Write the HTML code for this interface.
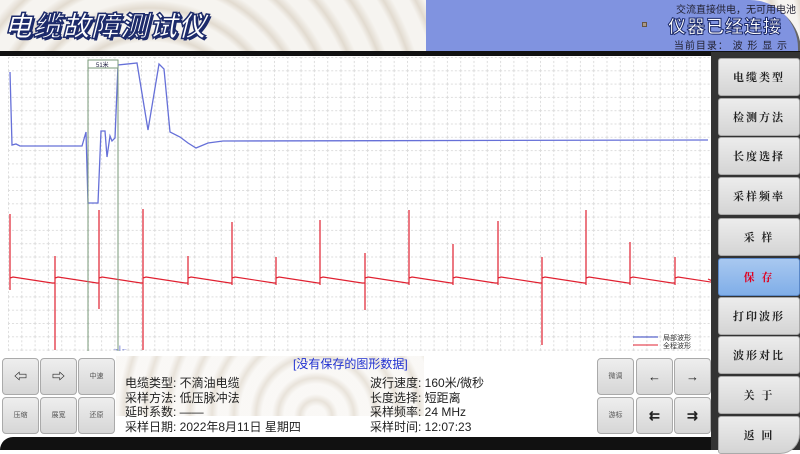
<!DOCTYPE html>
<html><head><meta charset="utf-8"><style>
*{margin:0;padding:0;box-sizing:border-box}
body{width:800px;height:450px;overflow:hidden;background:#fff;position:relative;font-family:"Liberation Sans","Noto Sans CJK SC",sans-serif}
.hdr{position:absolute;left:0;top:0;width:800px;height:52px;background:repeating-radial-gradient(circle at 150px 140px,#f6f4f0 0 14px,#e2dbd0 20px,#f6f4f0 28px)}
.title{position:absolute;left:4px;top:5px;font:italic bold 28px "Noto Sans CJK SC",sans-serif;color:#fff;letter-spacing:1px;-webkit-text-stroke:1.5px #1c2a6a;text-shadow:2px 2px 0 #1c2a6a}
.blue{position:absolute;left:426px;top:0;width:372px;height:51px;background:#8093e0;border-top-right-radius:48px;box-shadow:3px 3px 0 #666}
.b1{position:absolute;right:2px;top:1px;font-size:10px;color:#223}
.b2{position:absolute;right:16px;top:13px;font:bold 18px "Noto Sans CJK SC",sans-serif;color:#fff;-webkit-text-stroke:1px #1c2a6a;letter-spacing:1px}
.b3{position:absolute;right:10px;top:37px;font-size:10px;color:#223;letter-spacing:1px}
.line{position:absolute;left:0;top:51px;width:800px;height:5px;background:#111}
.chart{position:absolute;left:8px;top:57px;width:703px;height:294px;background:#fff}
.side{position:absolute;left:711px;top:52px;width:89px;height:398px;background:#333}
.btn{position:absolute;left:718px;width:82px;height:38px;background:linear-gradient(#ececec,#d4d4d4);border:1px solid #aaa;border-radius:3px;font:bold 11px "Noto Serif CJK SC",serif;color:#222;text-align:center;line-height:36px;letter-spacing:2px}
.btn.sel{background:linear-gradient(#a8c8f0,#80aee8);color:#e00020;border-color:#5a88c8}
.bot{position:absolute;left:0;top:352px;width:711px;height:85px;background:#fff}
.blk{position:absolute;left:0;top:437px;width:711px;height:13px;background:#111;border-top-left-radius:30px}
.sb{position:absolute;width:37px;height:37px;background:linear-gradient(#eee,#d6d6d6);border:1px solid #aaa;border-radius:4px;font-size:7px;color:#555;text-align:center;line-height:35px}
.sb.a{font-size:13px;color:#222;font-weight:bold}
.info{position:absolute;font-size:12px;color:#222;line-height:14.5px;white-space:pre}
.bg2{position:absolute;left:116px;top:356px;width:308px;height:60px;background:repeating-radial-gradient(circle at 200px 60px,#f8f6f3 0 10px,#e3dcd1 16px,#f8f6f3 22px);opacity:.8}
</style></head><body>
<div class="hdr"></div>
<div class="title">电缆故障测试仪</div>
<div class="blue"><div class="b1">交流直接供电，无可用电池</div><div class="b2">仪器已经连接</div><div class="b3">当前目录：&nbsp;波 形 显 示</div>
<div style="position:absolute;left:216px;top:22px;width:5px;height:5px;background:#a98;border:1px solid #654"></div></div>
<div class="line"></div>
<div class="side"></div>
<div class="chart"><svg width="703" height="294" id="sv">
<defs><pattern id="g" width="13.3" height="13.3" patternUnits="userSpaceOnUse"><path d="M0 .5H13.3M.5 0V13.3" stroke="#ddd" stroke-width="1" stroke-dasharray="2 2" fill="none"/></pattern></defs>
<rect width="703" height="294" fill="url(#g)"/>
<path d="M2 15 L4 88 L8 87 L12 89 L74 89 L78 75 L80 146 L90 146 L93 74 L97 74 L99 100 L102 79 L104 84 L107 81 L110 8 L129 6 L140 73 L151 7 L156 12 L162 75 L172 80 L180 86 L188 91 L200 86 L215 84 L700 83" stroke="#6670d8" stroke-width="1.3" fill="none"/>
<path id="red" stroke="#e02030" stroke-width="1.2" fill="none"/>
<line x1="80" y1="3" x2="80" y2="294" stroke="#7a9a7a"/><line x1="110" y1="3" x2="110" y2="294" stroke="#7a9a7a"/>
<rect x="80" y="3" width="30" height="8" fill="#fff" stroke="#7a9a7a"/><text x="88" y="10" font-size="6" fill="#224">51米</text>
<line x1="625" y1="280" x2="650" y2="280" stroke="#3040c0"/><line x1="625" y1="288" x2="650" y2="288" stroke="#e02030"/>
<text x="655" y="283" font-size="7" fill="#333">局部波形</text><text x="655" y="291" font-size="7" fill="#333">全程波形</text>
<text x="104" y="294" font-size="7" fill="#3040c0">→|←</text>
</svg></div>
<script>
var xs=[2,47,91,135,180,224,268,312,357,401,445,490,534,578,622,667],up=[157,199,153,152,199,165,200,163,196,153,187,164,200,153,185,200],dn=[233,293,252,293,228,228,228,228,253,228,228,228,288,228,228,228];
var d="";for(var i=0;i<xs.length;i++){var x=xs[i];d+=(i?"L":"M")+x+" "+(i?226:225)+" L"+x+" "+up[i]+" L"+x+" "+dn[i]+" L"+x+" 221 L"+(x+3)+" 220";d+=" L"+(x+42)+" 226 ";}
d+="L700 222";document.getElementById("red").setAttribute("d",d);
</script>
<div class="bot"></div>
<div class="bg2"></div>
<div class="blk"></div>
<div class="sb a" style="left:2px;top:358px">⇦</div><div class="sb a" style="left:40px;top:358px">⇨</div><div class="sb" style="left:78px;top:358px">中速</div>
<div class="sb" style="left:2px;top:397px">压缩</div><div class="sb" style="left:40px;top:397px">展宽</div><div class="sb" style="left:78px;top:397px">还原</div>
<div class="info" style="left:293px;top:357px;color:#2030d0">[没有保存的图形数据]</div>
<div class="info" style="left:125px;top:376px">电缆类型: 不滴油电缆
采样方法: 低压脉冲法
延时系数: ——
采样日期: 2022年8月11日 星期四</div>
<div class="info" style="left:370px;top:376px">波行速度: 160米/微秒
长度选择: 短距离
采样频率: 24 MHz
采样时间: 12:07:23</div>
<div class="sb" style="left:597px;top:358px">微调</div><div class="sb a" style="left:636px;top:358px">←</div><div class="sb a" style="left:674px;top:358px">→</div>
<div class="sb" style="left:597px;top:397px">游标</div><div class="sb a" style="left:636px;top:397px">⇇</div><div class="sb a" style="left:674px;top:397px">⇉</div>
<div class="btn" style="top:58px">电缆类型</div>
<div class="btn" style="top:98px">检测方法</div>
<div class="btn" style="top:137px">长度选择</div>
<div class="btn" style="top:177px">采样频率</div>
<div class="btn" style="top:218px">采 样</div>
<div class="btn sel" style="top:258px">保 存</div>
<div class="btn" style="top:297px">打印波形</div>
<div class="btn" style="top:336px">波形对比</div>
<div class="btn" style="top:376px">关 于</div>
<div class="btn" style="top:416px;border-bottom-right-radius:20px">返 回</div>
</body></html>
